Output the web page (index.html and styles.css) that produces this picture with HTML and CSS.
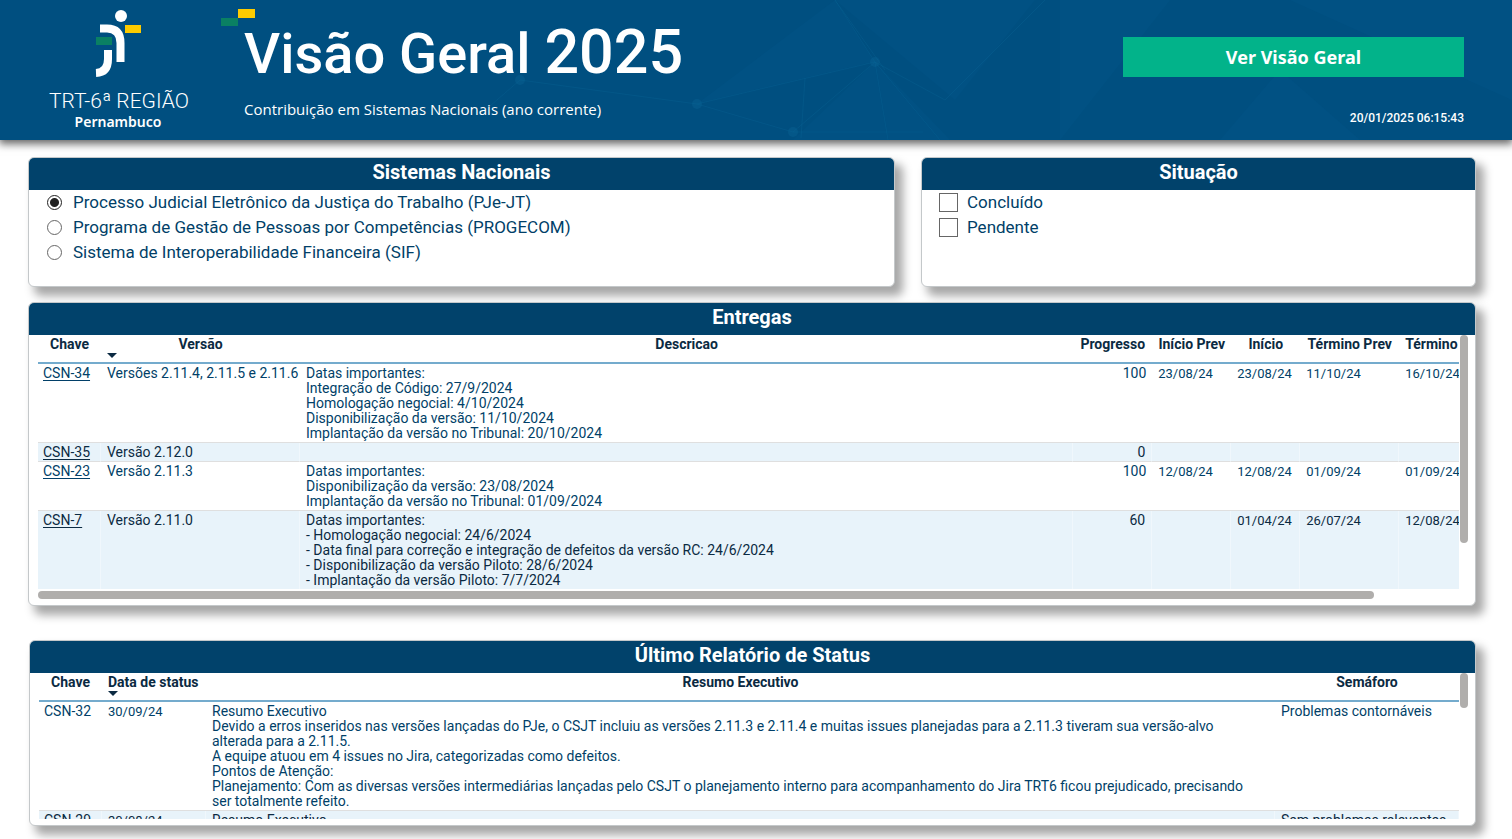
FILE: index.html
```html
<!DOCTYPE html>
<html lang="pt-BR">
<head>
<meta charset="utf-8">
<title>Visão Geral 2025</title>
<link rel="stylesheet" href="styles.css">
</head>
<body>
<header class="header">
  <svg class="network" viewBox="0 0 1512 140" preserveAspectRatio="none" aria-hidden="true">
    <g fill="#0a669a" fill-opacity=".13">
      <path d="M697 104 835 0l40 62z"/><path d="M835 0l120 100 80-100z"/><path d="M875 62l75 78H793z"/>
      <path d="M1060 0h110l-110 140z"/><path d="M1290 0l222 100V0z"/><path d="M1280 70l-60 70h140z"/>
    </g>
    <g stroke="#0c6a9c" stroke-opacity=".25" fill="none">
      <path d="M520 80 490 106M520 80 697 104 793 132 875 62 835 0M697 104 875 62 945 100M793 132h130M875 62l13 78M875 62l65 78M835 0l50 70M945 100 1045 0M805 78l-4 60"/>
    </g>
    <g fill="#0c6a9c" fill-opacity=".3"><circle cx="520" cy="80" r="5"/><circle cx="697" cy="104" r="5"/><circle cx="793" cy="132" r="5"/><circle cx="875" cy="62" r="5"/></g>
  </svg>
  <svg class="logo" width="144" height="130" viewBox="0 0 144 130" role="img" aria-label="TRT-6ª Região Pernambuco">
    <circle cx="74" cy="16" r="6" fill="#fff"/>
    <path d="M53 28.500H60Q73.500 28.500 73.500 43V62" fill="none" stroke="#fff" stroke-width="8"/>
    <path d="M61 50V59Q61 72.500 49 73" fill="none" stroke="#fff" stroke-width="8"/>
    <path d="M78 25h16v8H78z" fill="#fdcb00"/>
    <path d="M49 37h16v8H49z" fill="#0a8063"/>
    <text class="logo-name" x="72" y="108" text-anchor="middle">TRT-6ª REGIÃO</text>
    <text class="logo-place" x="71" y="127" text-anchor="middle">Pernambuco</text>
  </svg>
  <div class="heading">
    <svg class="flag" width="34" height="17" viewBox="0 0 34 17" aria-hidden="true"><path d="M17 0h17v9H17z" fill="#fdcb00"/><path d="M0 9h17v8H0z" fill="#0a8063"/></svg>
    <h1 class="title">Visão Geral <span class="year">2025</span></h1>
    <p class="subtitle">Contribuição em Sistemas Nacionais (ano corrente)</p>
  </div>
  <div class="actions">
    <button class="overview" type="button">Ver Visão Geral</button>
    <time class="updated" datetime="2025-01-20T06:15:43">20/01/2025 06:15:43</time>
  </div>
</header>
<main class="board">
  <div class="filters">
    <section class="panel">
      <h2 class="panel-title">Sistemas Nacionais</h2>
      <div class="options">
        <label class="option"><input class="radio" type="radio" name="sistema" checked>Processo Judicial Eletrônico da Justiça do Trabalho (PJe-JT)</label>
        <label class="option"><input class="radio" type="radio" name="sistema">Programa de Gestão de Pessoas por Competências (PROGECOM)</label>
        <label class="option"><input class="radio" type="radio" name="sistema">Sistema de Interoperabilidade Financeira (SIF)</label>
      </div>
    </section>
    <section class="panel">
      <h2 class="panel-title">Situação</h2>
      <div class="options options-check">
        <label class="option"><input class="check" type="checkbox">Concluído</label>
        <label class="option"><input class="check" type="checkbox">Pendente</label>
      </div>
    </section>
  </div>
  <section class="panel deliveries">
    <h2 class="panel-title">Entregas</h2>
    <div class="viewport">
      <div class="clip">
        <table class="grid grid-wide">
          <colgroup><col class="c-key"><col class="c-version"><col><col class="c-progress"><col class="c-progress"><col class="c-start"><col class="c-end-plan"><col class="c-end"></colgroup>
          <thead><tr><th>Chave</th><th>Versão<span class="sort"></span></th><th>Descricao</th><th>Progresso</th><th>Início Prev</th><th>Início</th><th>Término Prev</th><th class="left">Término</th></tr></thead>
          <tbody>
            <tr><td><a href="#csn-34">CSN-34</a></td><td class="line">Versões 2.11.4, 2.11.5 e 2.11.6</td><td>Datas importantes:<br>Integração de Código: 27/9/2024<br>Homologação negocial: 4/10/2024<br>Disponibilização da versão: 11/10/2024<br>Implantação da versão no Tribunal: 20/10/2024</td><td class="num">100</td><td class="date">23/08/24</td><td class="date">23/08/24</td><td class="date">11/10/24</td><td class="date">16/10/24</td></tr>
            <tr><td><a href="#csn-35">CSN-35</a></td><td class="line">Versão 2.12.0</td><td></td><td class="num">0</td><td></td><td></td><td></td><td></td></tr>
            <tr><td><a href="#csn-23">CSN-23</a></td><td class="line">Versão 2.11.3</td><td>Datas importantes:<br>Disponibilização da versão: 23/08/2024<br>Implantação da versão no Tribunal: 01/09/2024</td><td class="num">100</td><td class="date">12/08/24</td><td class="date">12/08/24</td><td class="date">01/09/24</td><td class="date">01/09/24</td></tr>
            <tr><td><a href="#csn-7">CSN-7</a></td><td class="line">Versão 2.11.0</td><td>Datas importantes:<br>- Homologação negocial: 24/6/2024<br>- Data final para correção e integração de defeitos da versão RC: 24/6/2024<br>- Disponibilização da versão Piloto: 28/6/2024<br>- Implantação da versão Piloto: 7/7/2024</td><td class="num">60</td><td></td><td class="date">01/04/24</td><td class="date">26/07/24</td><td class="date">12/08/24</td></tr>
          </tbody>
        </table>
      </div>
      <div class="bar-y"><div class="thumb-y"></div></div>
      <div class="bar-x"><div class="thumb-x"></div></div>
    </div>
  </section>
  <section class="panel status">
    <h2 class="panel-title">Último Relatório de Status</h2>
    <div class="viewport">
      <div class="clip">
        <table class="grid">
          <colgroup><col class="c-key"><col class="c-date"><col><col class="c-light"></colgroup>
          <thead><tr><th>Chave</th><th class="left">Data de status<span class="sort"></span></th><th>Resumo Executivo</th><th>Semáforo</th></tr></thead>
          <tbody>
            <tr><td>CSN-32</td><td class="date">30/09/24</td><td class="summary">Resumo Executivo<br>Devido a erros inseridos nas versões lançadas do PJe, o CSJT incluiu as versões 2.11.3 e 2.11.4 e muitas issues planejadas para a 2.11.3 tiveram sua versão-alvo alterada para a 2.11.5.<br>A equipe atuou em 4 issues no Jira, categorizadas como defeitos.<br>Pontos de Atenção:<br>Planejamento: Com as diversas versões intermediárias lançadas pelo CSJT o planejamento interno para acompanhamento do Jira TRT6 ficou prejudicado, precisando ser totalmente refeito.</td><td>Problemas contornáveis</td></tr>
            <tr><td>CSN-29</td><td class="date">30/08/24</td><td class="summary">Resumo Executivo</td><td>Sem problemas relevantes</td></tr>
          </tbody>
        </table>
      </div>
      <div class="bar-y"><div class="thumb-y thumb-short"></div></div>
    </div>
  </section>
</main>
</body>
</html>
```
FILE: styles.css
```css
* { box-sizing: border-box; }
body {
  margin: 0;
  height: 100vh;
  overflow: hidden;
  background: #fff;
  color: #013f68;
  font-family: Roboto, "Liberation Sans", sans-serif;
  font-size: 14px;
  line-height: 15px;
}
h1, h2, p { margin: 0; }

.header {
  position: relative;
  display: flex;
  height: 140px;
  padding: 0 48px 0 47px;
  background: #004f80;
  color: #fff;
  box-shadow: 0 3px 8px 1px rgba(0, 0, 0, .6);
}
.network { position: absolute; inset: 0; width: 100%; height: 100%; }
.logo { position: relative; flex: none; margin-right: 53px; }
.logo-name { fill: #fff; font: 300 21px Roboto, "Liberation Sans", sans-serif; }
.logo-place { fill: #fff; font: 600 14px "Noto Sans", sans-serif; }
.heading { position: relative; flex: 1; padding-top: 16px; }
.flag { position: absolute; left: -23px; top: 9px; }
.title { font-size: 56px; font-weight: 500; line-height: 72px; white-space: nowrap; }
.year { font-size: 61px; }
.subtitle { margin-top: 8px; font: 15px/22px "Open Sans", "Noto Sans", sans-serif; }
.actions {
  position: relative;
  display: flex;
  flex-direction: column;
  align-items: flex-end;
  gap: 34px;
  width: 341px;
  padding-top: 37px;
}
.overview {
  width: 100%;
  height: 40px;
  border: 0;
  background: #02b38a;
  color: #fff;
  font: 700 18px "Noto Sans", sans-serif;
}
.updated { font-size: 12px; font-weight: 500; }

.board { display: flex; flex-direction: column; padding: 17px 36px 0 28px; }
.filters { display: grid; grid-template-columns: 867fr 555fr; gap: 26px; height: 130px; }
.panel {
  display: flex;
  flex-direction: column;
  overflow: hidden;
  border: 1px solid #c4c8ca;
  border-radius: 6px;
  background: #fff;
  box-shadow: 7px 8px 10px 1px rgba(0, 0, 0, .35);
}
.panel-title {
  flex: none;
  height: 32px;
  background: #01426b;
  color: #fff;
  font-size: 20px;
  font-weight: 700;
  line-height: 28px;
  text-align: center;
}
.options { display: flex; flex-direction: column; padding-left: 18px; }
.options-check { padding-left: 17px; }
.option { display: flex; align-items: center; gap: 11px; height: 25px; font-size: 17px; }
.options-check .option { gap: 9px; }
.radio, .check { flex: none; appearance: none; margin: 0; border: 1px solid #666; background: #fff; }
.radio { width: 15px; height: 15px; border-radius: 50%; }
.radio:checked { border-color: #222; background: radial-gradient(circle, #222 4px, #fff 5px); }
.check { width: 19px; height: 19px; }

.deliveries { height: 304px; margin-top: 15px; }
.status { height: 186px; margin-top: 34px; margin-left: 1px; }
.viewport {
  display: grid;
  flex: 1;
  grid-template-columns: 1fr 9px;
  grid-template-rows: 1fr auto;
  min-height: 0;
  padding: 0 7px 6px 9px;
}
.clip { min-width: 0; overflow: hidden; }
.bar-y { padding-left: 1px; }
.thumb-y { width: 8px; height: 208px; border-radius: 4px; background: #b0aeac; }
.thumb-short { height: 35px; }
.bar-x { padding-top: 2px; }
.thumb-x { width: 94%; height: 8px; border-radius: 4px; background: #b0aeac; }

.grid { width: 100%; table-layout: fixed; border-collapse: separate; border-spacing: 0; }
.grid-wide { width: 106%; }
.c-key { width: 63px; }
.c-version { width: 199px; }
.c-progress { width: 79px; }
.c-start { width: 69px; }
.c-end-plan { width: 99px; }
.c-end { width: 145px; }
.c-date { width: 104px; }
.c-light { width: 184px; }
.grid th {
  height: 29px;
  padding: 2px 6px 0;
  border-bottom: 2px solid #74abcd;
  color: #0b2a42;
  font-weight: 700;
  text-align: center;
  vertical-align: top;
  white-space: nowrap;
}
.grid .left { text-align: left; }
.sort {
  display: block;
  width: 10px;
  border: 5px solid transparent;
  border-top-color: #0b2a42;
  border-bottom: 0;
  margin-top: 1px;
}
.grid td { padding: 2px 6px 1px; border-bottom: 1px solid #dfdfdf; vertical-align: top; }
.grid td:first-child { padding-left: 5px; padding-right: 0; }
.grid tbody tr:nth-child(even) td { background: #e8f3fa; border-right: 1px solid #f0f7fc; color: #0b2a42; }
.grid .num { text-align: right; }
.grid .line { padding-right: 0; white-space: nowrap; }
.grid .date { font-size: 13px; }
.grid .summary { padding-right: 20px; }
.grid a { color: inherit; text-underline-offset: 2px; }
```
